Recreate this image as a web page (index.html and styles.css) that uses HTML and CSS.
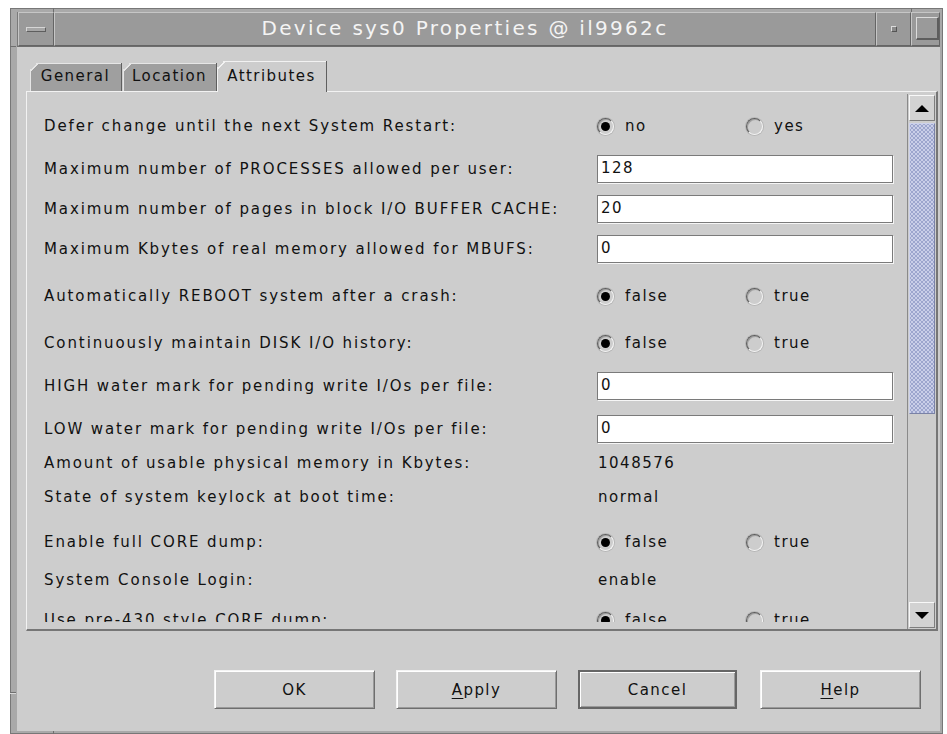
FILE: index.html
```html
<!DOCTYPE html>
<html lang="en">
<head>
<meta charset="utf-8">
<title>Device sys0 Properties @ il9962c</title>
<link rel="stylesheet" href="styles.css">
</head>
<body>
<div class="window">
  <span class="notch notch-top-left"></span>
  <span class="notch notch-top-right"></span>
  <span class="notch notch-left-top"></span>
  <span class="notch notch-left-bottom"></span>
  <span class="notch notch-bottom-left"></span>

  <div class="titlebar">
    <div class="wm-btn wm-menu"><span class="menu-bar"></span></div>
    <div class="title">Device sys0 Properties @ il9962c</div>
    <div class="wm-btn wm-min"><span class="min-dot"></span></div>
    <div class="wm-btn wm-max"><span class="max-box"></span></div>
  </div>

  <div class="client">
    <div class="tabs">
      <div class="tab">General</div>
      <div class="tab">Location</div>
      <div class="tab tab-active">Attributes</div>
    </div>

    <div class="panel">
      <div class="scroll-view">
        <div class="form">
          <div class="row">
            <div class="label">Defer change until the next System Restart:</div>
            <div class="radios">
              <span class="option"><span class="radio on"></span>no</span>
              <span class="option"><span class="radio"></span>yes</span>
            </div>
          </div>
          <div class="row gap-15">
            <div class="label">Maximum number of PROCESSES allowed per user:</div>
            <div class="field">128</div>
          </div>
          <div class="row gap-12">
            <div class="label">Maximum number of pages in block I/O BUFFER CACHE:</div>
            <div class="field">20</div>
          </div>
          <div class="row gap-12">
            <div class="label">Maximum Kbytes of real memory allowed for MBUFS:</div>
            <div class="field">0</div>
          </div>
          <div class="row gap-19">
            <div class="label">Automatically REBOOT system after a crash:</div>
            <div class="radios">
              <span class="option"><span class="radio on"></span>false</span>
              <span class="option"><span class="radio"></span>true</span>
            </div>
          </div>
          <div class="row gap-19">
            <div class="label">Continuously maintain DISK I/O history:</div>
            <div class="radios">
              <span class="option"><span class="radio on"></span>false</span>
              <span class="option"><span class="radio"></span>true</span>
            </div>
          </div>
          <div class="row gap-15">
            <div class="label">HIGH water mark for pending write I/Os per file:</div>
            <div class="field">0</div>
          </div>
          <div class="row gap-15">
            <div class="label">LOW water mark for pending write I/Os per file:</div>
            <div class="field">0</div>
          </div>
          <div class="row gap-6">
            <div class="label">Amount of usable physical memory in Kbytes:</div>
            <div class="value">1048576</div>
          </div>
          <div class="row gap-6">
            <div class="label">State of system keylock at boot time:</div>
            <div class="value">normal</div>
          </div>
          <div class="row gap-17">
            <div class="label">Enable full CORE dump:</div>
            <div class="radios">
              <span class="option"><span class="radio on"></span>false</span>
              <span class="option"><span class="radio"></span>true</span>
            </div>
          </div>
          <div class="row gap-10">
            <div class="label">System Console Login:</div>
            <div class="value">enable</div>
          </div>
          <div class="row gap-12">
            <div class="label">Use pre-430 style CORE dump:</div>
            <div class="radios">
              <span class="option"><span class="radio on"></span>false</span>
              <span class="option"><span class="radio"></span>true</span>
            </div>
          </div>
        </div>
      </div>

      <div class="scrollbar">
        <div class="arrow-btn"><span class="arrow-up"></span></div>
        <div class="thumb"></div>
        <div class="track"></div>
        <div class="arrow-btn"><span class="arrow-down"></span></div>
      </div>
    </div>

    <div class="buttons">
      <div class="btn">OK</div>
      <div class="btn"><u>A</u>pply</div>
      <div class="btn btn-default">Cancel</div>
      <div class="btn"><u>H</u>elp</div>
    </div>
  </div>
</div>
</body>
</html>
```

FILE: styles.css
```css
* {
  box-sizing: border-box;
}

html,
body {
  margin: 0;
  padding: 0;
  background: #ffffff;
}

body {
  width: 947px;
  height: 734px;
  overflow: hidden;
  font-family: "DejaVu Sans", "Liberation Sans", sans-serif;
  color: #111111;
}

/* ---- window manager frame ---- */
.window {
  position: relative;
  margin: 8px 0 0 10px;
  width: 933px;
  height: 726px;
  border: 1px solid #777777;
  background: #a9a9a9;
  padding: 3px 2px 2px 6px;
  display: flex;
  flex-direction: column;
}

.notch {
  position: absolute;
  background: #6f6f6f;
}

.notch-top-left {
  left: 42px;
  top: -1px;
  width: 1px;
  height: 4px;
}

.notch-top-right {
  left: 900px;
  top: -1px;
  width: 1px;
  height: 4px;
}

.notch-left-top {
  left: -1px;
  top: 37px;
  width: 6px;
  height: 1px;
}

.notch-left-bottom {
  left: -1px;
  top: 683px;
  width: 6px;
  height: 1px;
  box-shadow: 0 1px 0 #d8d8d8;
}

.notch-bottom-left {
  left: 42px;
  bottom: -1px;
  width: 1px;
  height: 3px;
}

.titlebar {
  height: 35px;
  display: flex;
  background: #9a9a9a;
  border-bottom: 1px solid #6d6d6d;
  border-left: 1px solid #7a7a7a;
}

.wm-btn {
  display: flex;
  align-items: center;
  justify-content: center;
  background: #9a9a9a;
  border-top: 1px solid #c6c6c6;
  border-left: 1px solid #c6c6c6;
  border-right: 1px solid #656565;
  border-bottom: 1px solid #656565;
}

.wm-menu {
  width: 36px;
}

.menu-bar {
  width: 20px;
  height: 5px;
  background: #a6a6a6;
  border-top: 1px solid #d6d6d6;
  border-left: 1px solid #d6d6d6;
  border-right: 1px solid #5e5e5e;
  border-bottom: 1px solid #5e5e5e;
}

.title {
  flex: 1;
  display: flex;
  align-items: center;
  justify-content: center;
  color: #f4f4f4;
  font-size: 20px;
  letter-spacing: 2.3px;
  border-top: 1px solid #c6c6c6;
  border-left: 1px solid #c6c6c6;
  border-right: 1px solid #656565;
  border-bottom: 1px solid #656565;
  padding-bottom: 2px;
}

.wm-min {
  width: 35px;
}

.min-dot {
  width: 6px;
  height: 6px;
  background: #8a8a8a;
  border-top: 1px solid #dcdcdc;
  border-left: 1px solid #dcdcdc;
  border-right: 1px solid #555555;
  border-bottom: 1px solid #555555;
}

.wm-max {
  width: 29px;
  justify-content: flex-end;
  align-items: flex-start;
  padding-top: 4px;
}

.max-box {
  width: 23px;
  height: 23px;
  border-top: 1px solid #dcdcdc;
  border-left: 1px solid #dcdcdc;
  border-right: 2px solid #5e5e5e;
  border-bottom: 2px solid #5e5e5e;
}

/* ---- dialog client area ---- */
.client {
  flex: 1;
  background: #cdcdcd;
  padding: 14px 0 0 9px;
  display: flex;
  flex-direction: column;
  font-size: 15px;
  letter-spacing: 1.9px;
}

.tabs {
  display: flex;
  align-items: flex-end;
  height: 30px;
  margin-left: 4px;
  position: relative;
  z-index: 1;
  letter-spacing: 1.45px;
}

.tab {
  height: 28px;
  padding-top: 4px;
  text-align: center;
  color: #111111;
  border-right: 1px solid #5f5f5f;
  background:
    linear-gradient(135deg, transparent 5px, #e6e6e6 5px, #e6e6e6 6.5px, transparent 6.5px),
    linear-gradient(#e6e6e6, #e6e6e6) 6px 0 / 100% 1px no-repeat,
    linear-gradient(#e6e6e6, #e6e6e6) 0 6px / 1px 100% no-repeat,
    linear-gradient(135deg, transparent 5px, #9f9f9f 5px);
}

.tab:nth-child(1) {
  width: 92px;
}

.tab:nth-child(2) {
  width: 94px;
  margin-left: 1px;
}

.tab-active {
  width: 110px;
  height: 31px;
  margin-bottom: -1px;
  padding-top: 6px;
  background:
    linear-gradient(135deg, transparent 5px, #f2f2f2 5px, #f2f2f2 6.5px, transparent 6.5px),
    linear-gradient(#f2f2f2, #f2f2f2) 6px 0 / 100% 1px no-repeat,
    linear-gradient(#f2f2f2, #f2f2f2) 0 6px / 1px 100% no-repeat,
    linear-gradient(135deg, transparent 5px, #cdcdcd 5px);
}

.panel {
  width: 912px;
  height: 540px;
  border-top: 1px solid #f2f2f2;
  border-left: 1px solid #f2f2f2;
  border-right: 2px solid #767676;
  border-bottom: 2px solid #767676;
  display: flex;
  padding-top: 2px;
}

/* the form is taller than the visible area; the last row is partly scrolled out */
.scroll-view {
  flex: 1;
  overflow: hidden;
  height: 528px;
}

.form {
  padding: 18px 0 0 17px;
  display: flex;
  flex-direction: column;
}

.row {
  height: 28px;
  display: flex;
  align-items: center;
  flex-shrink: 0;
}

.gap-6 { margin-top: 6px; }
.gap-10 { margin-top: 10px; }
.gap-12 { margin-top: 12px; }
.gap-15 { margin-top: 15px; }
.gap-17 { margin-top: 17px; }
.gap-19 { margin-top: 19px; }

.label {
  width: 553px;
  white-space: nowrap;
}

.field {
  width: 296px;
  height: 28px;
  background: #ffffff;
  border: 1px solid #7a7a7a;
  box-shadow: 1px 1px 0 #f6f6f6;
  padding: 3px 0 0 3px;
  letter-spacing: 1.5px;
}

.value {
  padding-left: 1px;
  letter-spacing: 1.5px;
}

.radios {
  display: flex;
  align-items: center;
  letter-spacing: 1.5px;
}

.option {
  display: flex;
  align-items: center;
}

.option:first-child {
  width: 149px;
}

.radio {
  width: 17px;
  height: 17px;
  border-radius: 50%;
  border: 1px solid;
  border-color: #5e5e5e #f4f4f4 #f4f4f4 #5e5e5e;
  box-shadow: inset 1px 1px 0 #a0a0a0, 0 0 0 1px rgba(140, 140, 140, 0.35);
  margin-right: 11px;
  display: flex;
  align-items: center;
  justify-content: center;
}

.radio.on::after {
  content: "";
  width: 9px;
  height: 9px;
  border-radius: 50%;
  background: #000000;
}

/* ---- vertical scrollbar ---- */
.scrollbar {
  width: 29px;
  border-left: 1px solid #8a8a8a;
  padding: 1px 1px 1px 1px;
  display: flex;
  flex-direction: column;
  height: 535px;
}

.arrow-btn {
  height: 26px;
  background: #d2d2d2;
  border-top: 1px solid #f8f8f8;
  border-left: 1px solid #f8f8f8;
  border-right: 1px solid #7e7e7e;
  border-bottom: 1px solid #7e7e7e;
  display: flex;
  align-items: center;
  justify-content: center;
}

.arrow-up {
  width: 0;
  height: 0;
  border-left: 7px solid transparent;
  border-right: 7px solid transparent;
  border-bottom: 7px solid #000000;
}

.arrow-down {
  width: 0;
  height: 0;
  border-left: 7px solid transparent;
  border-right: 7px solid transparent;
  border-top: 7px solid #000000;
}

.thumb {
  margin-top: 2px;
  height: 291px;
  border-top: 1px solid #cdd2ec;
  border-left: 1px solid #cdd2ec;
  border-right: 1px solid #7a82a6;
  border-bottom: 1px solid #7a82a6;
  background:
    radial-gradient(circle, #c9cee8 0.9px, transparent 1.3px) 0 0 / 4px 4px,
    radial-gradient(circle, #c9cee8 0.9px, transparent 1.3px) 2px 2px / 4px 4px,
    #9ca5cd;
}

.track {
  flex: 1;
}

/* ---- action buttons ---- */
.buttons {
  display: flex;
  gap: 21px;
  margin: 39px 0 0 188px;
  letter-spacing: 1.45px;
}

.btn {
  width: 161px;
  height: 39px;
  display: flex;
  align-items: center;
  justify-content: center;
  border: 1px solid;
  border-color: #f4f4f4 #6e6e6e #6e6e6e #f4f4f4;
  box-shadow: inset 1px 1px 0 #ffffff, inset -1px -1px 0 #9a9a9a;
  color: #111111;
}

.btn u {
  text-decoration-thickness: 1px;
  text-underline-offset: 3px;
}

.btn-default {
  width: 159px;
  border: 2px solid #666666;
  box-shadow: inset 1px 1px 0 #ffffff, inset -1px -1px 0 #9a9a9a;
}

.btn:last-child {
  margin-left: 2px;
}
```
